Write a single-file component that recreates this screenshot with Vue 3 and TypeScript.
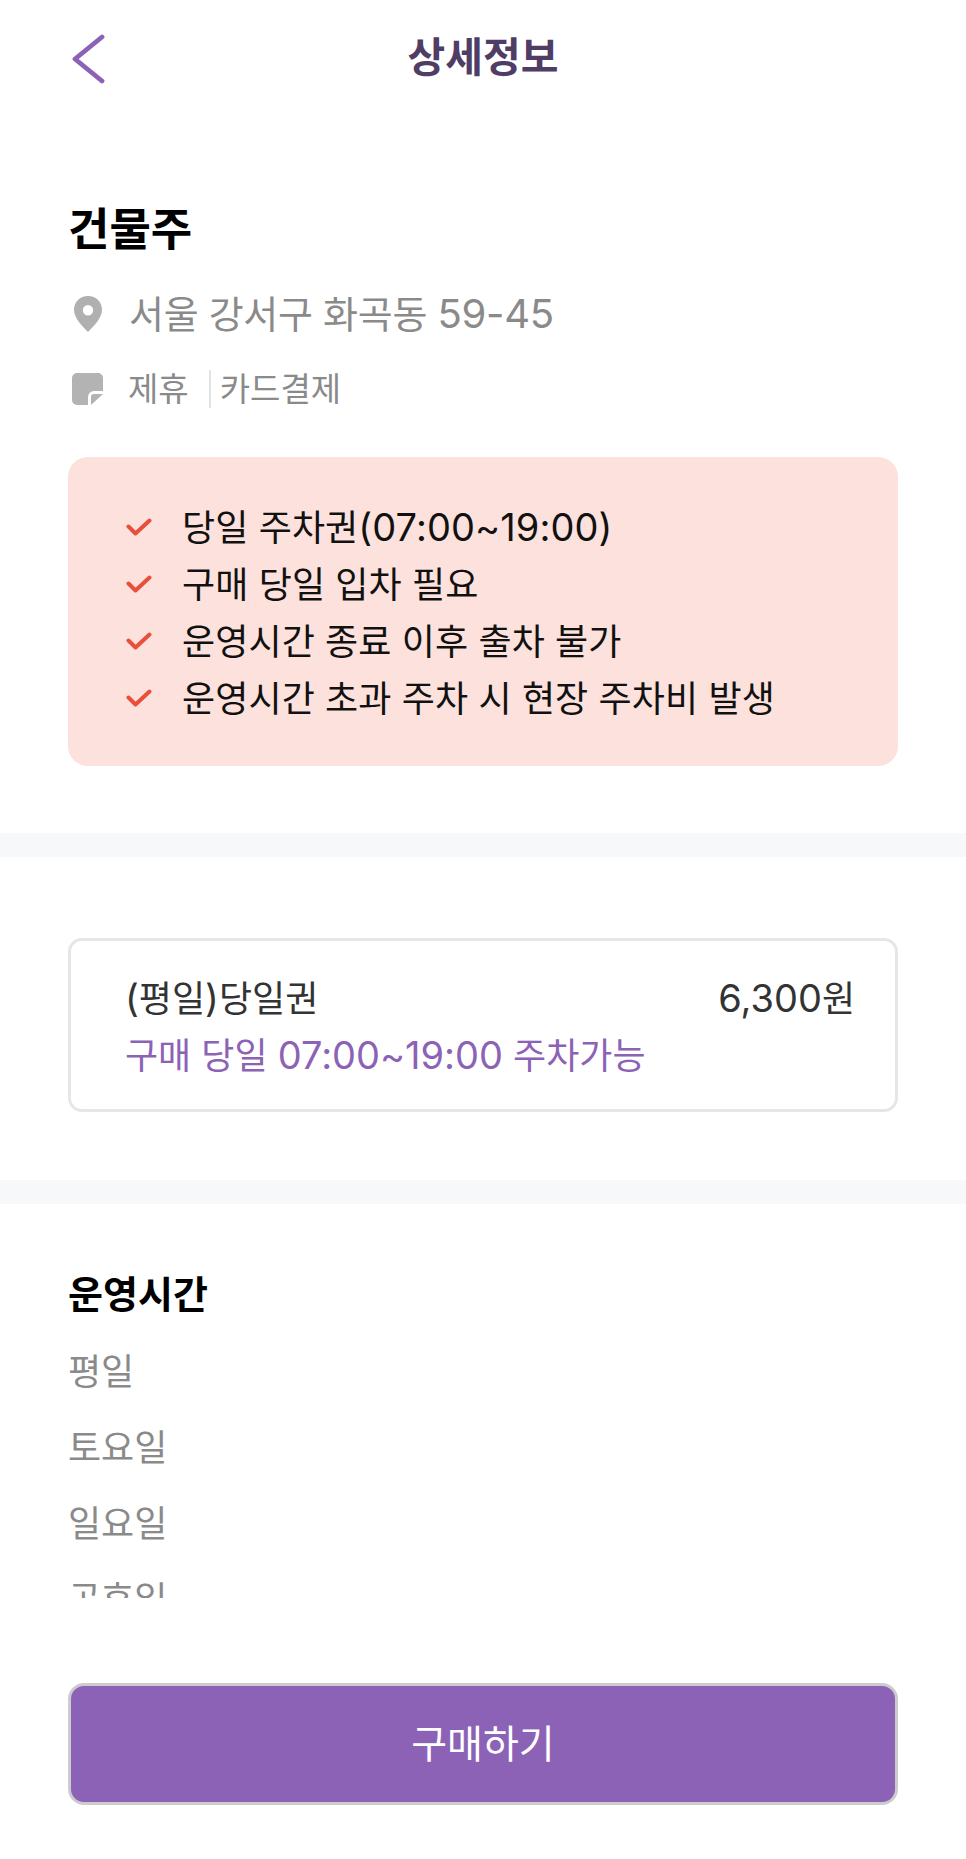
<script setup lang="ts">
const notices: string[] = [
  '당일 주차권(07:00~19:00)',
  '구매 당일 입차 필요',
  '운영시간 종료 이후 출차 불가',
  '운영시간 초과 주차 시 현장 주차비 발생',
];

const hours: string[] = ['평일', '토요일', '일요일', '공휴일'];

// digits and punctuation sit a little larger than the hangul around them
const parts = (text: string) =>
  text
    .split(/([()\d:~,-]+)/)
    .filter(Boolean)
    .map((value) => ({ value, num: /^[()\d:~,-]+$/.test(value) }));
</script>

<template>
  <div class="page">
    <div class="scroll">
      <header class="header">
        <svg class="back" width="36" height="50" viewBox="0 0 36 50" fill="none">
          <path d="M31 3 L4 25 L31 47" stroke="#8c62b6" stroke-width="4.800" stroke-linecap="round" stroke-linejoin="round" />
        </svg>
        <h1 class="title">상세정보</h1>
      </header>

      <section class="info">
        <h2 class="name">건물주</h2>
        <div class="address">
          <svg class="pin" width="30" height="36" viewBox="0 0 30 36">
            <path fill="#b0b0b0" fill-rule="evenodd" d="M15 0C6.900 0 1 6 1 13.800 1 22.600 10.500 31.600 15 36c4.500-4.400 14-13.400 14-22.200C29 6 23.100 0 15 0Zm0 9a5.200 5.200 0 1 1 0 10.400A5.200 5.200 0 0 1 15 9Z" />
          </svg>
          <span class="address-text">
            <span v-for="p in parts('서울 강서구 화곡동 59-45')" :key="p.value" :class="{ num: p.num }">{{ p.value }}</span>
          </span>
        </div>
        <div class="tags">
          <svg class="note" width="31" height="32" viewBox="0 0 31 32">
            <path fill="#b3b3b3" d="M5 0h21a5 5 0 0 1 5 5v13H22a6 6 0 0 0-6 6v8H5a5 5 0 0 1-5-5V5a5 5 0 0 1 5-5Z" />
            <path fill="#b3b3b3" d="M19 32v-8a3 3 0 0 1 3-3h9L19 32Z" />
          </svg>
          <span class="tag">제휴</span>
          <span class="sep"></span>
          <span class="tag">카드결제</span>
        </div>
        <ul class="notice">
          <li v-for="item in notices" :key="item" class="notice-row">
            <svg class="check" width="26" height="20" viewBox="0 0 26 20" fill="none">
              <path d="M2.500 9.500 L9.500 16.500 L23.500 3.500" stroke="#e8503a" stroke-width="4" stroke-linecap="round" stroke-linejoin="round" />
            </svg>
            <span>
              <span v-for="p in parts(item)" :key="p.value" :class="{ num: p.num }">{{ p.value }}</span>
            </span>
          </li>
        </ul>
      </section>

      <div class="divider"></div>

      <section class="ticket-wrap">
        <div class="ticket">
          <div class="ticket-top">
            <span>
              <span v-for="p in parts('(평일)당일권')" :key="p.value" :class="{ num: p.num }">{{ p.value }}</span>
            </span>
            <span>
              <span v-for="p in parts('6,300원')" :key="p.value" :class="{ num: p.num }">{{ p.value }}</span>
            </span>
          </div>
          <div class="ticket-desc">
            <span v-for="p in parts('구매 당일 07:00~19:00 주차가능')" :key="p.value" :class="{ num: p.num }">{{ p.value }}</span>
          </div>
        </div>
      </section>

      <div class="divider"></div>

      <section class="hours">
        <h3 class="hours-title">운영시간</h3>
        <div class="hours-list">
          <div v-for="day in hours" :key="day" class="hours-row">{{ day }}</div>
        </div>
      </section>
    </div>

    <footer class="footer">
      <button type="button" class="buy">구매하기</button>
    </footer>
  </div>
</template>

<style>
html,
body {
  margin: 0;
  background: #fff;
}
</style>

<style scoped>
.page {
  width: 966px;
  height: 1859px;
  display: flex;
  flex-direction: column;
  background: #fff;
  font-family: Inter, "Noto Sans CJK KR", sans-serif;
  overflow: hidden;
}

.scroll {
  height: 1598px;
  overflow: hidden;
  flex-shrink: 0;
}

.num {
  font-size: 1.055em;
}

.header {
  position: relative;
  height: 116px;
  display: flex;
  justify-content: center;
}

.back {
  position: absolute;
  left: 71px;
  top: 34px;
}

.title {
  margin: 30px 0 0;
  font-size: 41px;
  line-height: 54px;
  font-weight: 700;
  color: #4f3d66;
}

.info {
  padding: 84px 68px 67px 68px;
}

.name {
  margin: 0;
  font-size: 45px;
  line-height: 60px;
  font-weight: 700;
  color: #000;
}

.address {
  margin-top: 28px;
  display: flex;
  align-items: center;
  gap: 26px;
  padding-left: 5px;
  font-size: 38px;
  line-height: 52px;
  color: #8a8a8a;
}

.address-text {
  letter-spacing: -0.3px;
}

.tags {
  margin-top: 25px;
  display: flex;
  align-items: center;
  padding-left: 4px;
  font-size: 33px;
  line-height: 48px;
  color: #8a8a8a;
}

.note {
  margin-right: 25px;
}

.sep {
  width: 2px;
  height: 38px;
  background: #e3e3e3;
  margin: 0 9px 0 20px;
}

.notice {
  list-style: none;
  margin: 44px 0 0;
  padding: 39px 40px 42px 58px;
  background: #fce1dc;
  border-radius: 20px;
}

.notice-row {
  display: flex;
  align-items: center;
  gap: 30px;
  height: 57px;
  font-size: 36px;
  letter-spacing: 0.1px;
  color: #111;
}

.check {
  margin-top: 4px;
}

.divider {
  height: 24px;
  background: #f7f8fa;
}

.ticket-wrap {
  padding: 81px 68px 68px 68px;
}

.ticket {
  height: 174px;
  box-sizing: border-box;
  border: 3px solid #e6e6e6;
  border-radius: 14px;
  padding: 29px 40px 0 54px;
}

.ticket-top {
  display: flex;
  justify-content: space-between;
  font-size: 36px;
  line-height: 56px;
  color: #333;
}

.ticket-desc {
  font-size: 36px;
  line-height: 56px;
  color: #8c62b6;
}

.hours {
  padding: 64px 68px 0;
}

.hours-title {
  margin: 0;
  font-size: 38px;
  line-height: 52px;
  font-weight: 700;
  color: #000;
}

.hours-list {
  margin-top: 14px;
}

.hours-row {
  height: 76px;
  line-height: 76px;
  font-size: 36px;
  color: #8a8a8a;
}

.footer {
  padding: 85px 68px 0 68px;
}

.buy {
  display: block;
  width: 100%;
  height: 122px;
  box-sizing: border-box;
  border: 3px solid #cccccc;
  border-radius: 16px;
  padding: 0 0 6px;
  background: #8c62b6;
  color: #fff;
  font-family: inherit;
  font-size: 39px;
}
</style>
